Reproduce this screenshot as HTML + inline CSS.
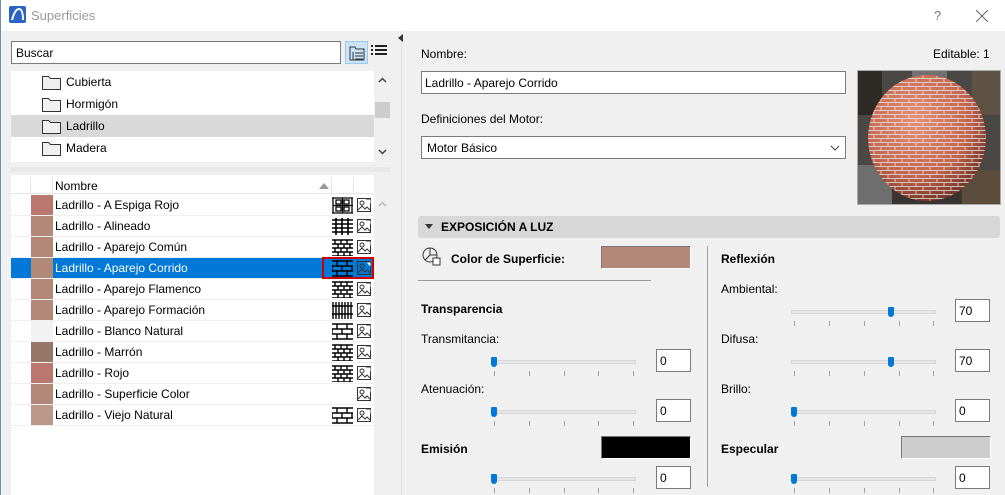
<!DOCTYPE html>
<html><head><meta charset="utf-8"><style>
*{box-sizing:border-box;margin:0;padding:0}
body{width:1005px;height:495px;overflow:hidden;background:#f0f0f0;font-family:"Liberation Sans",sans-serif;font-size:12px;color:#000;position:relative}
.a{position:absolute}
.t{position:absolute;white-space:nowrap;line-height:14px}
.b{font-weight:bold}
.box{position:absolute;background:#fff;border:1px solid #7a7a7a}
.row{position:absolute;left:11px;width:363px;height:21px;background:#fff;border-bottom:1px solid #f0f0f0}
.row .sw{position:absolute;left:20px;top:0;width:22px;height:20px}
.row .n{position:absolute;left:44px;top:3px;font-size:12px}
.row .p{position:absolute;left:321px;top:2px}
.row .i{position:absolute;left:346px;top:3px}
.trk{position:absolute;height:4px;background:#e6e6e6;border:1px solid #d6d6d6}
.th{position:absolute;width:6px;height:10px;background:#0078d7;border-radius:1px 1px 3px 3px}
.tk{position:absolute;width:1px;height:5px;background:#a0a0a0}
.num{position:absolute;width:35px;height:23px;background:#fff;border:1px solid #7a7a7a;padding:4px 3px;font-size:12px;line-height:14px}
</style></head><body>
<div class="a" style="left:0;top:0;width:1005px;height:31px;background:#fff"></div>
<div class="a" style="left:0;top:0;width:1px;height:495px;background:#6f8fb0"></div>
<svg class="a" style="left:9px;top:6px" width="17" height="17"><rect x="0" y="0" width="17" height="17" rx="2" fill="#2a64c6"/><path d="M3 14 Q6 3 10 3 Q14 3 14 14" stroke="#fff" stroke-width="2" fill="none"/></svg>
<div class="t" style="left:31px;top:9px;color:#999;font-size:13px">Superficies</div>
<div class="t" style="left:934px;top:9px;color:#777;font-size:13px">?</div>
<svg class="a" style="left:976px;top:10px" width="12" height="12"><path d="M0 0L12 12M12 0L0 12" stroke="#666" stroke-width="1"/></svg>

<div class="box" style="left:11px;top:41px;width:330px;height:23px;border-color:#7a7a7a"></div>
<div class="t" style="left:16px;top:46px">Buscar</div>
<div class="a" style="left:345px;top:41px;width:23px;height:23px;background:#cce4f7;border:1px solid #99c9ef"></div>
<svg class="a" style="left:348px;top:44px" width="18" height="18"><path d="M2 3h5l1 2h8v11H2z" fill="none" stroke="#333"/><path d="M7 9h8M7 12h8M7 15h8M5 8v8" stroke="#333"/></svg>
<svg class="a" style="left:371px;top:45px" width="16" height="12"><path d="M0 1h2M4 1h12M0 5h2M4 5h12M0 9h2M4 9h12" stroke="#222" stroke-width="2"/></svg>

<div class="a" style="left:11px;top:71px;width:363px;height:91px;background:#fff"></div>
<div class="a" style="left:11px;top:115px;width:363px;height:22px;background:#d9d9d9"></div>
<svg class="a" style="left:42px;top:73px" width="20" height="88"><g fill="#f0f0f0" stroke="#333"><path d="M0.5 3.5h6l2 2h10v11h-18z"/><path d="M0.5 25.5h6l2 2h10v11h-18z"/><path d="M0.5 47.5h6l2 2h10v11h-18z"/><path d="M0.5 69.5h6l2 2h10v11h-18z"/></g></svg>
<div class="t" style="left:66px;top:75px">Cubierta</div>
<div class="t" style="left:66px;top:97px">Hormigón</div>
<div class="t" style="left:66px;top:119px">Ladrillo</div>
<div class="t" style="left:66px;top:141px">Madera</div>
<svg class="a" style="left:378px;top:77px" width="9" height="6"><path d="M1 5l3.5-3.5L8 5" stroke="#444" fill="none" stroke-width="1.5"/></svg>
<div class="a" style="left:375px;top:102px;width:15px;height:16px;background:#cdcdcd"></div>
<svg class="a" style="left:378px;top:149px" width="9" height="6"><path d="M1 1l3.5 3.5L8 1" stroke="#444" fill="none" stroke-width="1.5"/></svg>
<div class="a" style="left:11px;top:167px;width:380px;height:5px;background:#e8e8e8"></div>

<div class="a" style="left:11px;top:175px;width:363px;height:320px;background:#fff"></div>
<div class="a" style="left:11px;top:177px;width:363px;height:17px;background:#fff;border-bottom:1px solid #e5e5e5"></div>
<div class="a" style="left:30px;top:177px;width:1px;height:17px;background:#e5e5e5"></div>
<div class="a" style="left:52px;top:177px;width:1px;height:17px;background:#e5e5e5"></div>
<div class="a" style="left:331px;top:177px;width:1px;height:17px;background:#e5e5e5"></div>
<div class="a" style="left:353px;top:177px;width:1px;height:17px;background:#e5e5e5"></div>
<div class="t" style="left:55px;top:179px">Nombre</div>
<svg class="a" style="left:319px;top:183px" width="10" height="6"><path d="M0 6L5 0L10 6z" fill="#999"/></svg>
<svg class="a" style="left:378px;top:201px" width="9" height="6"><path d="M1 5l3.5-3.5L8 5" stroke="#bbb" fill="none" stroke-width="1.5"/></svg>

<svg width="0" height="0" style="position:absolute"><defs>
<g id="pi"><rect x="0.5" y="0.5" width="13" height="13" fill="none" stroke="#333"/><circle cx="5" cy="5" r="2" fill="none" stroke="#333"/><path d="M1 12l4-4 3 3 2-2 3 3" fill="none" stroke="#333"/><path d="M9 1h5v5" fill="#fff" stroke="#333"/></g>
<g id="brk"><rect width="21" height="17" fill="#fff"/><path d="M0 1h21M0 5h21M0 9h21M0 13h21M0 17h21" stroke="#000" stroke-width="1.6"/><path d="M3 1v4M9 1v4M15 1v4M6 5v4M12 5v4M18 5v4M3 9v4M9 9v4M15 9v4M6 13v4M12 13v4M18 13v4" stroke="#000" stroke-width="1.4"/></g>
<g id="aln"><rect width="21" height="17" fill="#fff"/><path d="M0 2h21M0 6h21M0 10h21M0 14h21M4 0v17M10 0v17M16 0v17" stroke="#000" stroke-width="1.6"/></g>
<g id="spig"><rect width="21" height="17" fill="#fff"/><path d="M0 1h21M0 16h21M1 1v15M20 1v15M4 3h5v4h-5zM12 3h5v4h-5zM4 10h5v4h-5zM12 10h5v4h-5zM1 8.5h20M10.5 1v15" stroke="#000" stroke-width="1.3" fill="none"/></g>
<g id="wide"><rect width="21" height="17" fill="#fff"/><path d="M0 1h21M0 6h21M0 11h21M0 16h21" stroke="#000" stroke-width="1.6"/><path d="M5 1v5M15 1v5M10 6v5M20 6v5M5 11v5M15 11v5M0 6v5" stroke="#000" stroke-width="1.4"/></g>
<g id="vert"><rect width="21" height="17" fill="#fff"/><path d="M1 0v17M4 0v17M7 0v17M10 0v17M13 0v17M16 0v17M19 0v17M0 4h21M0 12h21" stroke="#000" stroke-width="1.4"/></g>
</defs></svg>

<div class="row" style="top:195px"><div class="sw" style="background:#b9776e"></div><div class="n">Ladrillo - A Espiga Rojo</div><svg class="p" width="21" height="17"><use href="#spig"/></svg><svg class="i" width="14" height="14"><use href="#pi"/></svg></div>
<div class="row" style="top:216px"><div class="sw" style="background:#b38879"></div><div class="n">Ladrillo - Alineado</div><svg class="p" width="21" height="17"><use href="#aln"/></svg><svg class="i" width="14" height="14"><use href="#pi"/></svg></div>
<div class="row" style="top:237px"><div class="sw" style="background:#b38879"></div><div class="n">Ladrillo - Aparejo Común</div><svg class="p" width="21" height="17"><use href="#brk"/></svg><svg class="i" width="14" height="14"><use href="#pi"/></svg></div>
<div class="row" style="top:258px;background:#0078d7"><div class="sw" style="background:#b38879"></div><div class="n" style="color:#fff">Ladrillo - Aparejo Corrido</div><div class="a" style="left:311px;top:-1px;width:52px;height:22px;border:2px solid #c00"></div><svg class="p" width="21" height="17"><rect width="21" height="17" fill="#0078d7"/><path d="M0 1h21M0 6h21M0 11h21M0 16h21M5 1v5M15 1v5M10 6v5M20 6v5M5 11v5M15 11v5M0 6v5" stroke="#000" stroke-width="1.4"/></svg><svg class="i" width="14" height="14"><use href="#pi"/></svg></div>
<div class="row" style="top:279px"><div class="sw" style="background:#b38879"></div><div class="n">Ladrillo - Aparejo Flamenco</div><svg class="p" width="21" height="17"><use href="#brk"/></svg><svg class="i" width="14" height="14"><use href="#pi"/></svg></div>
<div class="row" style="top:300px"><div class="sw" style="background:#b38879"></div><div class="n">Ladrillo - Aparejo Formación</div><svg class="p" width="21" height="17"><use href="#vert"/></svg><svg class="i" width="14" height="14"><use href="#pi"/></svg></div>
<div class="row" style="top:321px"><div class="sw" style="background:#f2f2f2"></div><div class="n">Ladrillo - Blanco Natural</div><svg class="p" width="21" height="17"><use href="#wide"/></svg><svg class="i" width="14" height="14"><use href="#pi"/></svg></div>
<div class="row" style="top:342px"><div class="sw" style="background:#977868"></div><div class="n">Ladrillo - Marrón</div><svg class="p" width="21" height="17"><use href="#brk"/></svg><svg class="i" width="14" height="14"><use href="#pi"/></svg></div>
<div class="row" style="top:363px"><div class="sw" style="background:#b9776e"></div><div class="n">Ladrillo - Rojo</div><svg class="p" width="21" height="17"><use href="#brk"/></svg><svg class="i" width="14" height="14"><use href="#pi"/></svg></div>
<div class="row" style="top:384px"><div class="sw" style="background:#b38879"></div><div class="n">Ladrillo - Superficie Color</div><svg class="i" width="14" height="14"><use href="#pi"/></svg></div>
<div class="row" style="top:405px"><div class="sw" style="background:#bb998a"></div><div class="n">Ladrillo - Viejo Natural</div><svg class="p" width="21" height="17"><use href="#wide"/></svg><svg class="i" width="14" height="14"><use href="#pi"/></svg></div>

<div class="a" style="left:391px;top:31px;width:11px;height:464px;background:#f0f0f0"></div>
<div class="a" style="left:401px;top:31px;width:1px;height:464px;background:#e0e0e0"></div>
<svg class="a" style="left:398px;top:34px" width="5" height="8"><path d="M5 0L0 4L5 8z" fill="#333"/></svg>

<div class="t" style="left:421px;top:47px">Nombre:</div>
<div class="t" style="left:933px;top:47px">Editable: 1</div>
<div class="box" style="left:421px;top:71px;width:425px;height:23px"></div>
<div class="t" style="left:425px;top:76px">Ladrillo - Aparejo Corrido</div>
<div class="t" style="left:421px;top:112px">Definiciones del Motor:</div>
<div class="box" style="left:421px;top:136px;width:425px;height:23px"></div>
<div class="t" style="left:427px;top:141px">Motor Básico</div>
<svg class="a" style="left:830px;top:145px" width="10" height="6"><path d="M1 1l4 4 4-4" stroke="#444" fill="none"/></svg>

<svg class="a" style="left:857px;top:70px" width="144" height="135">
<defs><radialGradient id="sg" cx="40%" cy="35%" r="65%"><stop offset="0" stop-color="#e2907a"/><stop offset=".7" stop-color="#c06650"/><stop offset="1" stop-color="#7a3a2c"/></radialGradient>
<pattern id="bp" width="14" height="8" patternUnits="userSpaceOnUse"><path d="M0 .5h14M3 0v4M0 4.5h14M10 4v4" stroke="#f2e6e0" stroke-width="1" fill="none"/></pattern>
<clipPath id="cc"><ellipse cx="70" cy="68" rx="59" ry="63"/></clipPath></defs>
<rect width="144" height="135" fill="#4a4744"/>
<rect x="0" y="0" width="25" height="45" fill="#2e2a26"/><rect x="55" y="0" width="35" height="20" fill="#707070"/><rect x="115" y="0" width="29" height="45" fill="#5e5244"/>
<rect x="0" y="95" width="35" height="40" fill="#6e6e6e"/><rect x="105" y="100" width="39" height="35" fill="#5c4c3c"/><rect x="35" y="112" width="70" height="23" fill="#3a3430"/>
<ellipse cx="70" cy="68" rx="59" ry="63" fill="url(#sg)"/>
<ellipse cx="70" cy="68" rx="59" ry="63" fill="url(#bp)" clip-path="url(#cc)" opacity=".75"/>
<rect x=".5" y=".5" width="143" height="134" fill="none" stroke="#aaa"/></svg>

<div class="a" style="left:418px;top:216px;width:582px;height:22px;background:#d7d7d7;border-radius:3px"></div>
<svg class="a" style="left:425px;top:224px" width="8" height="5"><path d="M0 0h8L4 5z" fill="#333"/></svg>
<div class="t b" style="left:441px;top:220px">EXPOSICIÓN A LUZ</div>

<div class="a" style="left:707px;top:246px;width:1px;height:241px;background:#a0a0a0"></div>

<svg class="a" style="left:422px;top:247px" width="20" height="20"><circle cx="8" cy="8" r="7" fill="none" stroke="#333"/><path d="M8 1v7l-5 5M8 8h7" stroke="#333" fill="none"/><rect x="11" y="11" width="7" height="7" fill="#fff" stroke="#333"/></svg>
<div class="t b" style="left:451px;top:252px">Color de Superficie:</div>
<div class="a" style="left:601px;top:246px;width:90px;height:23px;background:#b38879;border:1px solid #777;border-right-color:#fff;border-bottom-color:#fff"></div>
<div class="a" style="left:418px;top:280px;width:233px;height:1px;background:#999"></div>
<div class="t b" style="left:421px;top:302px">Transparencia</div>
<div class="t" style="left:421px;top:332px">Transmitancia:</div>
<div class="t" style="left:421px;top:382px">Atenuación:</div>
<div class="t b" style="left:421px;top:442px">Emisión</div>
<div class="a" style="left:601px;top:436px;width:90px;height:23px;background:#000;border:1px solid #777;border-right-color:#fff;border-bottom-color:#fff"></div>

<div class="t b" style="left:721px;top:252px">Reflexión</div>
<div class="t" style="left:721px;top:282px">Ambiental:</div>
<div class="t" style="left:721px;top:332px">Difusa:</div>
<div class="t" style="left:721px;top:382px">Brillo:</div>
<div class="t b" style="left:721px;top:442px">Especular</div>
<div class="a" style="left:901px;top:436px;width:90px;height:23px;background:#cdcdcd;border:1px solid #777;border-right-color:#fff;border-bottom-color:#fff"></div>

<!-- left sliders -->
<div class="trk" style="left:491px;top:360px;width:145px"></div><div class="th" style="left:491px;top:357px"></div>
<div class="tk" style="left:494px;top:371px"></div><div class="tk" style="left:529px;top:371px"></div><div class="tk" style="left:564px;top:371px"></div><div class="tk" style="left:598px;top:371px"></div><div class="tk" style="left:633px;top:371px"></div>
<div class="num" style="left:656px;top:349px">0</div>
<div class="trk" style="left:491px;top:410px;width:145px"></div><div class="th" style="left:491px;top:407px"></div>
<div class="tk" style="left:494px;top:421px"></div><div class="tk" style="left:529px;top:421px"></div><div class="tk" style="left:564px;top:421px"></div><div class="tk" style="left:598px;top:421px"></div><div class="tk" style="left:633px;top:421px"></div>
<div class="num" style="left:656px;top:399px">0</div>
<div class="trk" style="left:491px;top:477px;width:145px"></div><div class="th" style="left:491px;top:474px"></div>
<div class="tk" style="left:494px;top:488px"></div><div class="tk" style="left:529px;top:488px"></div><div class="tk" style="left:564px;top:488px"></div><div class="tk" style="left:598px;top:488px"></div><div class="tk" style="left:633px;top:488px"></div>
<div class="num" style="left:656px;top:466px">0</div>

<!-- right sliders -->
<div class="trk" style="left:791px;top:310px;width:145px"></div><div class="th" style="left:888px;top:307px"></div>
<div class="num" style="left:955px;top:299px">70</div>
<div class="trk" style="left:791px;top:360px;width:145px"></div><div class="th" style="left:888px;top:357px"></div>
<div class="num" style="left:955px;top:349px">70</div>
<div class="trk" style="left:791px;top:410px;width:145px"></div><div class="th" style="left:791px;top:407px"></div>
<div class="num" style="left:955px;top:399px">0</div>
<div class="trk" style="left:791px;top:477px;width:145px"></div><div class="th" style="left:791px;top:474px"></div>
<div class="num" style="left:955px;top:466px">0</div>
<div class="tk" style="left:794px;top:321px"></div><div class="tk" style="left:829px;top:321px"></div><div class="tk" style="left:864px;top:321px"></div><div class="tk" style="left:899px;top:321px"></div><div class="tk" style="left:933px;top:321px"></div>
<div class="tk" style="left:794px;top:371px"></div><div class="tk" style="left:829px;top:371px"></div><div class="tk" style="left:864px;top:371px"></div><div class="tk" style="left:899px;top:371px"></div><div class="tk" style="left:933px;top:371px"></div>
<div class="tk" style="left:794px;top:421px"></div><div class="tk" style="left:829px;top:421px"></div><div class="tk" style="left:864px;top:421px"></div><div class="tk" style="left:899px;top:421px"></div><div class="tk" style="left:933px;top:421px"></div>
<div class="tk" style="left:794px;top:488px"></div><div class="tk" style="left:829px;top:488px"></div><div class="tk" style="left:864px;top:488px"></div><div class="tk" style="left:899px;top:488px"></div><div class="tk" style="left:933px;top:488px"></div>
</body></html>
